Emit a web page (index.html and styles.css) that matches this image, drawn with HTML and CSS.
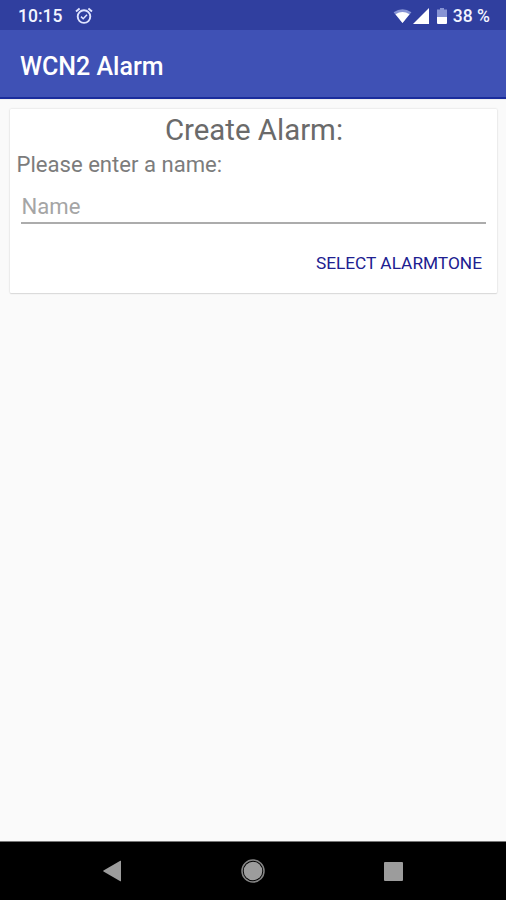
FILE: index.html
```html
<!DOCTYPE html>
<html lang="en">
<head>
<meta charset="utf-8">
<title>WCN2 Alarm</title>
<link rel="stylesheet" href="styles.css">
</head>
<body>
<div class="status">
  <span class="time">10:15</span>
  <svg class="alarm" viewBox="0 0 18 18" width="18" height="18" fill="none" stroke="#dfe4ff">
    <circle cx="9" cy="9.6" r="6.3" stroke-width="1.9"/>
    <path d="M1 4.4 4.6 1.4M17 4.4 13.4 1.4" stroke-width="1.9"/>
    <path d="m6 9.6 2.2 2.2L12 7.8" stroke-width="1.5"/>
  </svg>
  <span class="spacer"></span>
  <svg class="wifi" viewBox="0 0 20 16" width="19" height="15">
    <path d="M0.5 3.5Q10-3 19.5 3.5L10 15Z" fill="#8794d4"/>
    <path d="M2.5 5.5Q10 1 17.5 5.5L10 15Z" fill="#fff"/>
  </svg>
  <svg class="signal" viewBox="0 0 16 16" width="16" height="16"><path d="M16 0V16H0Z" fill="#fff"/></svg>
  <svg class="battery" viewBox="0 0 10 16" width="10" height="16">
    <path d="M3 0H7V1.5H10V9H0V1.5H3Z" fill="#8794d4"/>
    <path d="M0 9H10V15Q10 16 9 16H1Q0 16 0 15Z" fill="#fff"/>
  </svg>
  <span class="percent">38 %</span>
</div>
<header class="appbar"><h1 class="title">WCN2 Alarm</h1></header>
<main class="content">
  <section class="card">
    <h2 class="heading">Create Alarm:</h2>
    <label class="label" for="name">Please enter a name:</label>
    <input class="field" id="name" type="text" placeholder="Name">
    <button class="action" type="button">SELECT ALARMTONE</button>
  </section>
</main>
<nav class="navbar">
  <svg viewBox="0 0 24 24" width="24" height="24"><path d="M21 2V22Q21 22.5 20.3 22.2L3.5 12.5Q2.8 12 3.5 11.5L20.3 1.7Q21 1.5 21 2Z" fill="#9c9c9c"/></svg>
  <svg viewBox="0 0 24 24" width="24" height="24"><circle cx="12" cy="12" r="11" fill="none" stroke="#858585" stroke-width="1.5"/><circle cx="12" cy="12" r="9.3" fill="#9c9c9c"/></svg>
  <svg viewBox="0 0 24 24" width="24" height="24"><rect x="3" y="3" width="19" height="19" rx="1" fill="#9c9c9c"/></svg>
</nav>
</body>
</html>
```
FILE: styles.css
```css
* { box-sizing: border-box; }
body {
  margin: 0;
  height: 900px;
  display: flex;
  flex-direction: column;
  background: #fafafa;
  font-family: Roboto, "Liberation Sans", sans-serif;
  overflow: hidden;
}
.status {
  height: 30px;
  flex: none;
  display: flex;
  align-items: center;
  padding: 2px 16px 0 18px;
  background: #303f9f;
  color: #f3f5ff;
  font-size: 17.5px;
  font-weight: 500;
  line-height: 28px;
}
.alarm { margin-left: 13px; }
.spacer { flex: 1; }
.signal { margin-left: 1px; }
.battery { margin-left: 8px; }
.percent { margin-left: 6px; }
.appbar {
  height: 69px;
  flex: none;
  display: flex;
  align-items: center;
  padding: 5px 20px 0;
  background: #3f51b5;
  border-bottom: 2px solid #1a2c9c;
}
.title {
  margin: 0;
  color: #fff;
  font-size: 25px;
  font-weight: 500;
}
.content {
  flex: 1;
  padding: 9px 9px 0 10px;
  border-top: 1px solid #eeeeef;
}
.card {
  height: 184px;
  display: flex;
  flex-direction: column;
  padding: 4px 11px 0 6px;
  background: #fff;
  border-radius: 1px;
  box-shadow: 0 0 2px #ccc, 0 1px 1px #ddd;
}
.heading {
  margin: 0 -6px -1px 0;
  text-align: center;
  color: #6a6a6a;
  font-size: 29.4px;
  font-weight: 400;
  line-height: 35px;
}
.label {
  margin-left: 0.5px;
  color: #7c7c7c;
  font-size: 22.1px;
  line-height: 35px;
}
.field {
  height: 42px;
  margin-left: 5px;
  padding: 8px 0 0 0.5px;
  border: 0;
  border-bottom: 2px solid #acacac;
  outline: 0;
  background: transparent;
  font: 22.1px Roboto, "Liberation Sans", sans-serif;
}
.field::placeholder { color: #a5a5a5; opacity: 1; }
.action {
  align-self: flex-end;
  margin: 25px 4px 0 0;
  padding: 0;
  border: 0;
  background: none;
  color: #202090;
  font: 400 17.3px/28px Roboto, "Liberation Sans", sans-serif;
}
.navbar {
  height: 59px;
  flex: none;
  display: flex;
  justify-content: space-between;
  align-items: center;
  padding: 0 101px 1px 100px;
  background: #000;
  border-top: 1px solid #777;
}
```
